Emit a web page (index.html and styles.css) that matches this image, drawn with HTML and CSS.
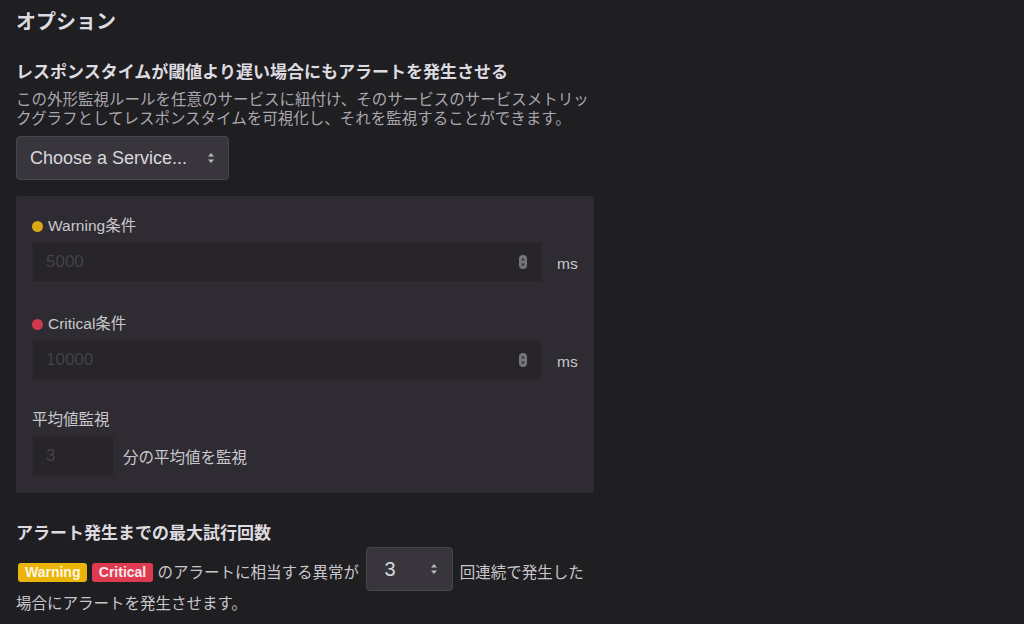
FILE: index.html
```html
<!DOCTYPE html>
<html lang="ja">
<head>
  <meta charset="UTF-8">
  <title>オプション</title>
  <link rel="stylesheet" href="styles.css">
</head>
<body>

  <div class="options">
    <h2>オプション</h2>

    <h3>レスポンスタイムが閾値より遅い場合にもアラートを発生させる</h3>
    <p class="desc">この外形監視ルールを任意のサービスに紐付け、そのサービスのサービスメトリックグラフとしてレスポンスタイムを可視化し、それを監視することができます。</p>

    <div class="select service-select">
      <span>Choose a Service...</span>
      <svg width="8" height="12" viewBox="0 0 8 12"><path d="M4 1 L7 4.5 H1 Z M4 11 L7 7.5 H1 Z" fill="#bdbbc0"/></svg>
    </div>

    <div class="panel">
      <div class="label"><span class="dot warning"></span>Warning条件</div>
      <div class="row">
        <div class="input wide">
          <input type="text" placeholder="5000">
          <svg width="8" height="14" viewBox="0 0 8 14"><rect x="0" y="0" width="8" height="14" rx="4" fill="#77757a"/><path d="M4 2.5 L6 5.5 H2 Z M4 11.5 L6 8.5 H2 Z" fill="#3a383c"/></svg>
        </div>
        <span class="unit">ms</span>
      </div>

      <div class="label gap"><span class="dot critical"></span>Critical条件</div>
      <div class="row">
        <div class="input wide">
          <input type="text" placeholder="10000">
          <svg width="8" height="14" viewBox="0 0 8 14"><rect x="0" y="0" width="8" height="14" rx="4" fill="#77757a"/><path d="M4 2.5 L6 5.5 H2 Z M4 11.5 L6 8.5 H2 Z" fill="#3a383c"/></svg>
        </div>
        <span class="unit">ms</span>
      </div>

      <div class="label gap avg">平均値監視</div>
      <div class="row">
        <div class="input small">
          <input type="text" placeholder="3">
        </div>
        <span class="after">分の平均値を監視</span>
      </div>
    </div>

    <h3 class="retry-title">アラート発生までの最大試行回数</h3>
    <p class="retry"><span class="badge warning">Warning</span> <span class="badge critical">Critical</span> のアラートに相当する異常が <span class="select count"><span>3</span><svg width="8" height="12" viewBox="0 0 8 12"><path d="M4 1 L7 4.5 H1 Z M4 11 L7 7.5 H1 Z" fill="#bdbbc0"/></svg></span> 回連続で発生した場合にアラートを発生させます。</p>
  </div>

</body>
</html>
```

FILE: styles.css
```css
body {
  margin: 0;
  background: #1f1e21;
  color: #d6d4d8;
  font-family: "Liberation Sans", "Noto Sans CJK JP", sans-serif;
}

.options {
  width: 578px;
  padding: 0 16px;
}

h2 {
  font-size: 20px;
  line-height: 24px;
  margin: 10px 0 0 0;
  color: #dddbe0;
}

h3 {
  font-size: 17px;
  line-height: 22px;
  margin: 28px 0 0 0;
  color: #dddbe0;
}

.desc {
  font-size: 15.5px;
  line-height: 19px;
  margin: 6px 0 0 0;
  color: #a9a7ad;
}

.select {
  display: flex;
  align-items: center;
  justify-content: space-between;
  background: #38363c;
  border: 1px solid #48464d;
  border-radius: 4px;
  box-sizing: border-box;
  color: #dad8dd;
}

.service-select {
  width: 213px;
  height: 44px;
  margin-top: 8px;
  padding: 0 13px 0 13px;
  font-size: 18px;
}

.panel {
  margin-top: 16px;
  background: #2e2c32;
  border-radius: 2px;
  padding: 18px 16px 17px 16px;
}

.label {
  display: flex;
  align-items: center;
  font-size: 15.5px;
  line-height: 24px;
  color: #c9c7cc;
}

.label.gap {
  margin-top: 30px;
}

.label.avg {
  margin-top: 28px;
}

.dot {
  width: 11px;
  height: 11px;
  border-radius: 50%;
  margin-right: 5px;
}

.dot.warning {
  background: #d9a916;
}

.dot.critical {
  background: #cf3a4e;
}

.row {
  display: flex;
  align-items: center;
  margin-top: 4px;
}

.input {
  display: flex;
  align-items: center;
  height: 40px;
  box-sizing: border-box;
  background: #272529;
  border: 1px solid #2b292e;
  border-radius: 2px;
  padding: 0 14px 0 0;
}

.input input {
  flex: 1;
  min-width: 0;
  background: transparent;
  border: none;
  outline: none;
  font-family: inherit;
  font-size: 17px;
  padding: 0 0 0 13px;
  color: #dddbe0;
}

.input input::placeholder {
  color: #444246;
}

.input.wide {
  width: 510px;
}

.input.small {
  width: 82px;
  padding: 0;
}

.unit {
  margin-left: 15px;
  font-size: 15.5px;
  color: #c9c7cc;
  padding-top: 4px;
}

.after {
  margin-left: 9px;
  font-size: 15.5px;
  color: #c9c7cc;
}

.retry-title {
  margin-top: 30px;
}

.retry {
  font-size: 15.5px;
  line-height: 26px;
  margin: 2px 0 0 0;
  color: #c9c7cc;
}

.badge {
  display: inline-block;
  font-size: 14px;
  font-weight: bold;
  line-height: 19px;
  padding: 0 7px;
  border-radius: 3px;
  vertical-align: 1px;
  color: #fff6e0;
}

.badge.warning {
  background: #eab409;
  margin-left: 2px;
}

.badge.critical {
  background: #df3a50;
  color: #fbe9ec;
}

.count {
  display: inline-flex;
  width: 87px;
  height: 44px;
  padding: 0 14px 0 17px;
  font-size: 20px;
  vertical-align: 2px;
  margin: 0 2px 0 3px;
}
```
